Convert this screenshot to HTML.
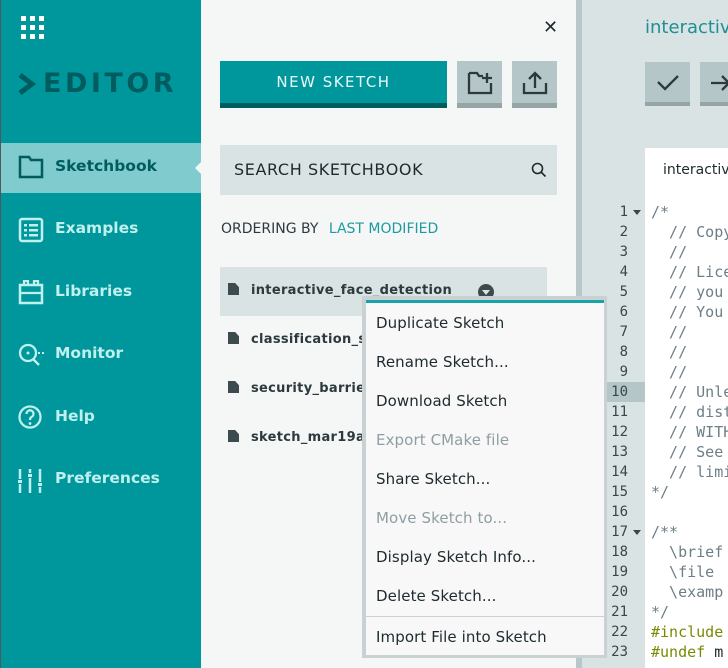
<!DOCTYPE html>
<html><head><meta charset="utf-8"><style>
*{margin:0;padding:0;box-sizing:border-box}
body{width:728px;height:668px;overflow:hidden;position:relative;font-family:"Liberation Sans","DejaVu Sans",sans-serif;background:#f5f7f7}
.abs{position:absolute}
#side{left:0;top:0;width:201px;height:668px;background:#00979c;border-left:1px solid #4a5a5e}
.nav{position:absolute;left:0;width:200px;height:50px;color:#bff0ee;font-weight:bold;font-size:15.5px;font-family:"DejaVu Sans",sans-serif}
.nav span{position:absolute;left:54px;top:14px}
.nav svg{position:absolute;left:17px;top:12px}
.item{position:absolute;left:376px;font-size:15px;color:#1d2a2e;font-family:"DejaVu Sans",sans-serif;letter-spacing:0.1px}
.dis{color:#8f9ea2}
.sk{position:absolute;left:228px;font-size:13px;font-weight:bold;color:#2c3a3e;font-family:"DejaVu Sans",sans-serif;letter-spacing:0.3px}
.sk i{display:inline-block;width:11px;height:12px;background:#3d4b4f;margin-right:12px;vertical-align:-1px;clip-path:polygon(0 0,65% 0,100% 35%,100% 100%,0 100%)}
.ln{position:absolute;left:604px;width:24px;text-align:right;font-size:14px;color:#38474b;font-family:"DejaVu Sans Mono",monospace;line-height:20px}
.cd{position:absolute;left:651px;font-size:15px;line-height:20px;color:#6c7f86;white-space:pre;font-family:"DejaVu Sans Mono",monospace}
</style></head><body>
<div id="side" class="abs">
 <svg class="abs" style="left:20px;top:16px" width="25" height="25"><g fill="#fff">
 <rect x="0" y="0" width="5" height="5"/><rect x="9" y="0" width="5" height="5"/><rect x="18" y="0" width="5" height="5"/>
 <rect x="0" y="9" width="5" height="5"/><rect x="9" y="9" width="5" height="5"/><rect x="18" y="9" width="5" height="5"/>
 <rect x="0" y="18" width="5" height="5"/><rect x="9" y="18" width="5" height="5"/><rect x="18" y="18" width="5" height="5"/></g></svg>
 <svg class="abs" style="left:17px;top:73px" width="20" height="22"><path d="M2 2 L14 11 L2 20" fill="none" stroke="#005c5f" stroke-width="5"/></svg>
 <div class="abs" style="left:42px;top:68px;font-size:27px;letter-spacing:3.5px;color:#005c5f;font-weight:bold;font-family:'DejaVu Sans',sans-serif">EDITOR</div>
 <div class="nav" style="top:143px;background:#7fcbcd;color:#005c5f"><svg width="26" height="24"><path d="M2 2h9l2 3h11v17H2z" fill="none" stroke="#005c5f" stroke-width="2.5"/></svg><span>Sketchbook</span>
 <div class="abs" style="left:194px;top:19px;width:0;height:0;border-top:6px solid transparent;border-bottom:6px solid transparent;border-right:6px solid #f5f7f7"></div></div>
 <div class="nav" style="top:205px"><svg width="26" height="26"><rect x="2" y="2" width="22" height="22" rx="2" fill="none" stroke="#bff0ee" stroke-width="2.5"/><g fill="#bff0ee"><rect x="6" y="7" width="3" height="2.5"/><rect x="11" y="7" width="9" height="2.5"/><rect x="6" y="12" width="3" height="2.5"/><rect x="11" y="12" width="9" height="2.5"/><rect x="6" y="17" width="3" height="2.5"/><rect x="11" y="17" width="9" height="2.5"/></g></svg><span>Examples</span></div>
 <div class="nav" style="top:268px"><svg width="26" height="26"><rect x="2" y="5" width="22" height="18" fill="none" stroke="#bff0ee" stroke-width="2.5"/><path d="M2 13h22M6 5V1h4v4M16 5V1h4v4" fill="none" stroke="#bff0ee" stroke-width="2.2"/></svg><span>Libraries</span></div>
 <div class="nav" style="top:330px"><svg width="28" height="26"><circle cx="10" cy="11" r="8" fill="none" stroke="#bff0ee" stroke-width="2.3"/><path d="M15 17l6 6" stroke="#bff0ee" stroke-width="2.3"/><circle cx="10" cy="11" r="1.5" fill="#bff0ee"/><rect x="20" y="10" width="2" height="2" fill="#bff0ee"/><rect x="24" y="10" width="2" height="2" fill="#bff0ee"/></svg><span>Monitor</span></div>
 <div class="nav" style="top:393px"><svg width="26" height="26"><circle cx="12" cy="12" r="10.5" fill="none" stroke="#bff0ee" stroke-width="2.3"/><path d="M8.5 9a3.5 3.5 0 1 1 5 3c-1.2.6-1.5 1.3-1.5 3" fill="none" stroke="#bff0ee" stroke-width="2.3"/><circle cx="12" cy="18.5" r="1.4" fill="#bff0ee"/></svg><span>Help</span></div>
 <div class="nav" style="top:455px"><svg width="26" height="28"><g stroke="#bff0ee" stroke-width="2.5"><path d="M2 2v10M2 17v9M12 2v4M12 11v15M22 2v13M22 20v6"/></g><g fill="#bff0ee"><rect x="0" y="13" width="4" height="3"/><rect x="10" y="7" width="4" height="3"/><rect x="20" y="16" width="4" height="3"/></g></svg><span>Preferences</span></div>
</div>

<div class="abs" style="left:543px;top:17px;font-size:18px;color:#1d2a2e">✕</div>
<div class="abs" style="left:220px;top:61px;width:227px;height:47px;background:#00979c;border-bottom:5px solid #005c5f;color:#e8f8f7;font-size:15px;letter-spacing:1.5px;text-align:center;line-height:43px;font-family:'DejaVu Sans',sans-serif">NEW SKETCH</div>
<div class="abs" style="left:457px;top:61px;width:45px;height:47px;background:#b5c6c8;border-bottom:5px solid #95a5a6"><svg style="margin:10px 0 0 10px" width="26" height="24"><path d="M2 2h8l2 3h4M24 12v10H2V2" fill="none" stroke="#2c3a3e" stroke-width="2.3"/><path d="M20 2v10M15 7h10" stroke="#2c3a3e" stroke-width="2.3"/></svg></div>
<div class="abs" style="left:512px;top:61px;width:45px;height:47px;background:#b5c6c8;border-bottom:5px solid #95a5a6"><svg style="margin:10px 0 0 10px" width="26" height="24"><path d="M2 12v10h22V12M13 17V2M7 8l6-6 6 6" fill="none" stroke="#2c3a3e" stroke-width="2.3"/></svg></div>
<div class="abs" style="left:220px;top:145px;width:337px;height:50px;background:#dae3e3"><div class="abs" style="left:14px;top:15px;font-size:16px;color:#1d2a2e;letter-spacing:0.6px;font-family:'DejaVu Sans',sans-serif">SEARCH SKETCHBOOK</div>
<svg class="abs" style="left:311px;top:17px" width="16" height="16"><circle cx="6.5" cy="6.5" r="5" fill="none" stroke="#1d2a2e" stroke-width="1.6"/><path d="M10 10l4.5 4.5" stroke="#1d2a2e" stroke-width="1.6"/></svg></div>
<div class="abs" style="left:221px;top:221px;font-size:14px;color:#2c3a3e;font-family:'DejaVu Sans',sans-serif">ORDERING BY <span style="color:#1e9aa0;margin-left:6px">LAST MODIFIED</span></div>
<div class="abs" style="left:220px;top:267px;width:327px;height:49px;background:#dae3e3"></div>
<div class="sk" style="top:283px"><i></i>interactive_face_detection</div>
<div class="abs" style="left:478px;top:284px;width:16px;height:16px;border-radius:50%;background:#3d4b4f"><div style="margin:6px 0 0 4px;width:0;height:0;border-left:4px solid transparent;border-right:4px solid transparent;border-top:5px solid #dae3e3"></div></div>
<div class="sk" style="top:332px"><i></i>classification_s</div>
<div class="sk" style="top:381px"><i></i>security_barrier</div>
<div class="sk" style="top:430px"><i></i>sketch_mar19a</div>

<div class="abs" style="left:576px;top:0;width:6px;height:668px;background:#b8c8ca"></div>
<div class="abs" style="left:582px;top:0;width:146px;height:668px;background:#dae3e3"></div>
<div class="abs" style="left:645px;top:17px;font-size:18px;color:#1e8f95;font-family:'DejaVu Sans',sans-serif">interactive</div>
<div class="abs" style="left:645px;top:62px;width:45px;height:44px;background:#b5c6c8;border-bottom:4px solid #95a5a6"><svg style="margin:11px 0 0 11px" width="24" height="20"><path d="M2 9l7 7 13-13" fill="none" stroke="#2c3a3e" stroke-width="2.3"/></svg></div>
<div class="abs" style="left:700px;top:62px;width:45px;height:44px;background:#b5c6c8;border-bottom:4px solid #95a5a6"><svg style="margin:11px 0 0 9px" width="24" height="20"><path d="M2 10h18M13 3l7 7-7 7" fill="none" stroke="#2c3a3e" stroke-width="2.3"/></svg></div>
<div class="abs" style="left:645px;top:148px;width:83px;height:520px;background:#fff"></div>
<div class="abs" style="left:663px;top:162px;font-size:14px;color:#1d2a2e;font-family:'DejaVu Sans',sans-serif">interactive</div>
<div class="abs" style="left:604px;top:382px;width:41px;height:20px;background:#b5c6c8"></div>
<div class="ln" style="top:202px">1</div><div class="ln" style="top:222px">2</div><div class="ln" style="top:242px">3</div><div class="ln" style="top:262px">4</div><div class="ln" style="top:282px">5</div><div class="ln" style="top:302px">6</div><div class="ln" style="top:322px">7</div><div class="ln" style="top:342px">8</div><div class="ln" style="top:362px">9</div><div class="ln" style="top:382px">10</div><div class="ln" style="top:402px">11</div><div class="ln" style="top:422px">12</div><div class="ln" style="top:442px">13</div><div class="ln" style="top:462px">14</div><div class="ln" style="top:482px">15</div><div class="ln" style="top:502px">16</div><div class="ln" style="top:522px">17</div><div class="ln" style="top:542px">18</div><div class="ln" style="top:562px">19</div><div class="ln" style="top:582px">20</div><div class="ln" style="top:602px">21</div><div class="ln" style="top:622px">22</div><div class="ln" style="top:642px">23</div>
<div class="abs" style="left:633px;top:210px;border-left:4px solid transparent;border-right:4px solid transparent;border-top:5px solid #38474b"></div>
<div class="abs" style="left:633px;top:530px;border-left:4px solid transparent;border-right:4px solid transparent;border-top:5px solid #38474b"></div>
<div class="cd" style="top:202px">/*
  // Copyr
  //
  // Lice
  // you
  // You
  //
  //
  //
  // Unle
  // dist
  // WITH
  // See
  // limi
*/

/**
  \brief
  \file
  \examp
*/</div>
<div class="cd" style="top:622px;color:#7a8a00">#include</div>
<div class="cd" style="top:642px;color:#7a8a00">#undef <span style="color:#1d2a2e">m</span></div>

<div class="abs" style="left:362px;top:296px;width:245px;height:362px;background:#c9d1d2"></div>
<div class="abs" style="left:366px;top:300px;width:238px;height:355px;background:#f8f8f8;border-top:3px solid #17a3a8"></div>
<div class="abs" style="left:366px;top:616px;width:238px;height:1px;background:#c9d1d2"></div>
<div class="item" style="top:314px">Duplicate Sketch</div>
<div class="item" style="top:353px">Rename Sketch...</div>
<div class="item" style="top:392px">Download Sketch</div>
<div class="item dis" style="top:431px">Export CMake file</div>
<div class="item" style="top:470px">Share Sketch...</div>
<div class="item dis" style="top:509px">Move Sketch to...</div>
<div class="item" style="top:548px">Display Sketch Info...</div>
<div class="item" style="top:587px">Delete Sketch...</div>
<div class="item" style="top:628px">Import File into Sketch</div>
</body></html>
